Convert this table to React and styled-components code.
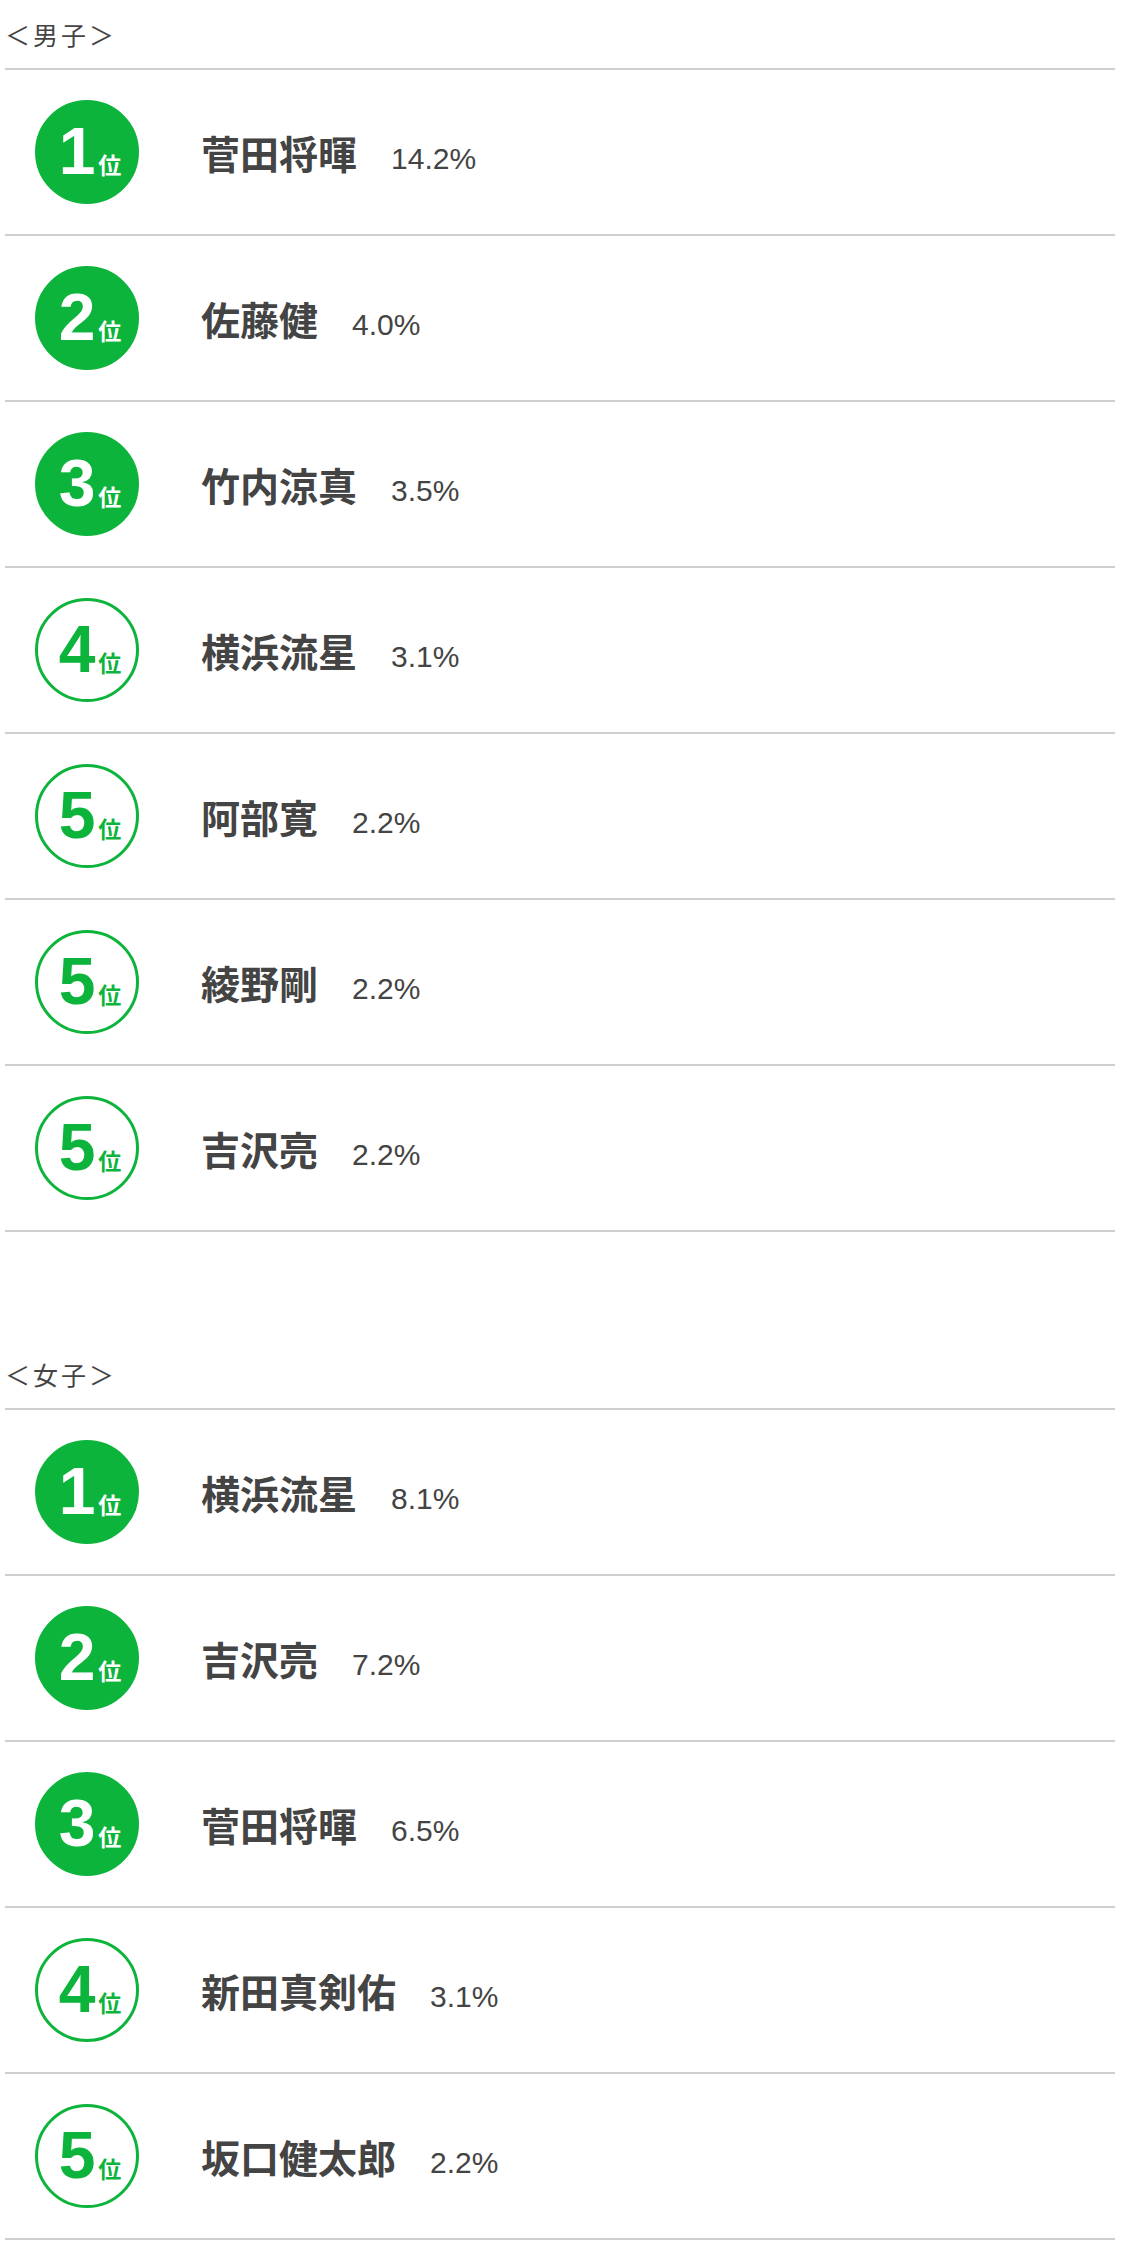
import React from 'react';
import styled, { createGlobalStyle } from 'styled-components';

const GlobalStyle = createGlobalStyle`
  body {
    margin: 0;
    background: #fff;
    font-family: "Noto Sans CJK JP", "Noto Sans", sans-serif;
  }
`;

const boys = [
  { rank: 1, name: '菅田将暉', rate: '14.2%' },
  { rank: 2, name: '佐藤健', rate: '4.0%' },
  { rank: 3, name: '竹内涼真', rate: '3.5%' },
  { rank: 4, name: '横浜流星', rate: '3.1%' },
  { rank: 5, name: '阿部寛', rate: '2.2%' },
  { rank: 5, name: '綾野剛', rate: '2.2%' },
  { rank: 5, name: '吉沢亮', rate: '2.2%' },
];

const girls = [
  { rank: 1, name: '横浜流星', rate: '8.1%' },
  { rank: 2, name: '吉沢亮', rate: '7.2%' },
  { rank: 3, name: '菅田将暉', rate: '6.5%' },
  { rank: 4, name: '新田真剣佑', rate: '3.1%' },
  { rank: 5, name: '坂口健太郎', rate: '2.2%' },
];

const RankingSection = ({ title, items }) => (
  <Section>
    <SectionTitle>{title}</SectionTitle>
    <List>
      {items.map((item, index) => (
        <Row key={index}>
          <Badge $filled={item.rank <= 3}>
            <Num>{item.rank}</Num>
            <Unit>位</Unit>
          </Badge>
          <Info>
            <Name>{item.name}</Name>
            <Rate>{item.rate}</Rate>
          </Info>
        </Row>
      ))}
    </List>
  </Section>
);

const App = () => (
  <>
    <GlobalStyle />
    <Page>
      <RankingSection title="＜男子＞" items={boys} />
      <RankingSection title="＜女子＞" items={girls} />
    </Page>
  </>
);

export default App;

const Page = styled.div`
  padding: 0 11px 20px 5px;
`;

const Section = styled.section`
  & + & {
    margin-top: 108px;
  }
`;

const SectionTitle = styled.h2`
  margin: 0;
  height: 68px;
  display: flex;
  align-items: center;
  font-size: 25px;
  font-weight: 400;
  letter-spacing: 3px;
  color: #444;
`;

const List = styled.ul`
  list-style: none;
  margin: 0;
  padding: 0;
  border-top: 2px solid #cfcfcf;
`;

const Row = styled.li`
  height: 164px;
  display: flex;
  align-items: center;
  padding-left: 30px;
  border-bottom: 2px solid #cfcfcf;
`;

const Badge = styled.div`
  box-sizing: border-box;
  width: 104px;
  height: 104px;
  border-radius: 50%;
  display: flex;
  align-items: baseline;
  justify-content: center;
  padding-top: 15px;
  padding-left: 6px;
  background: ${p => (p.$filled ? '#0cb43b' : '#fff')};
  border: 3px solid #0cb43b;
  color: ${p => (p.$filled ? '#fff' : '#0cb43b')};
`;

const Num = styled.span`
  font-family: "Liberation Sans", Arial, sans-serif;
  font-weight: 700;
  font-size: 66px;
  line-height: 66px;
`;

const Unit = styled.span`
  font-family: "Noto Sans CJK JP", sans-serif;
  font-weight: 700;
  font-size: 23px;
  margin-left: 3px;
`;

const Info = styled.div`
  display: flex;
  align-items: baseline;
  margin-left: 62px;
  color: #444;
`;

const Name = styled.span`
  font-family: "Noto Sans CJK JP", sans-serif;
  font-weight: 700;
  font-size: 39px;
`;

const Rate = styled.span`
  font-family: "Liberation Sans", Arial, sans-serif;
  font-size: 30px;
  margin-left: 34px;
`;
